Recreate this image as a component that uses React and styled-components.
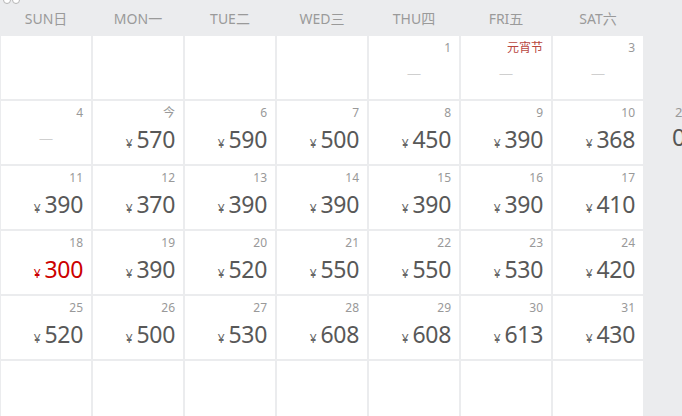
import React from 'react';
import styled, { createGlobalStyle } from 'styled-components';

const Global = createGlobalStyle`
  html, body {
    margin: 0;
    padding: 0;
    background: #ebecee;
    overflow: hidden;
  }
  body {
    font-family: "Noto Sans", "Noto Sans CJK SC", sans-serif;
  }
`;

const Page = styled.div`
  position: relative;
  display: flex;
  align-items: flex-start;
  width: 682px;
  height: 416px;
  overflow: hidden;
  background: #ebecee;
`;

const Calendar = styled.div`
  flex: none;
  display: flex;
  flex-direction: column;
  padding-left: 1px;
`;

const Header = styled.div`
  flex: none;
  display: grid;
  grid-template-columns: repeat(7, 90px);
  column-gap: 2px;
  height: 36px;
  align-items: center;
`;

const DayName = styled.div`
  text-align: center;
  font-size: 14px;
  color: #9a9a9a;
  padding-bottom: 1px;
`;

const Grid = styled.div`
  flex: none;
  display: grid;
  grid-template-columns: repeat(7, 90px);
  grid-auto-rows: 63px;
  gap: 2px;
`;

const Cell = styled.div`
  background: #fff;
  display: flex;
  flex-direction: column;
  padding: 4px 8px 0 8px;
`;

const DateLabel = styled.div`
  text-align: right;
  font-size: 12px;
  line-height: 15px;
  height: 15px;
  color: ${(p) => (p.$holiday ? '#b8473f' : '#999')};
`;

const Price = styled.div`
  margin-top: 6px;
  text-align: right;
  font-size: 23px;
  line-height: 26px;
  letter-spacing: -0.3px;
  color: ${(p) => (p.$low ? '#c00' : '#585858')};
`;

const Yen = styled.span`
  font-size: 12px;
  margin-right: 4px;
  color: ${(p) => (p.$low ? '#c00' : '#666')};
`;

const Dash = styled.div`
  margin-top: 9px;
  text-align: center;
  font-family: "Liberation Sans", sans-serif;
  font-size: 13px;
  line-height: 20px;
  color: #cfcfcf;
`;

const Side = styled.div`
  flex: none;
  display: flex;
  flex-direction: column;
  gap: 4px;
  padding: 104px 0 0 29px;
  white-space: nowrap;
`;

const SideSmall = styled.div`
  font-size: 13px;
  line-height: 16px;
  color: #999;
  padding-left: 3px;
`;

const SideBig = styled.div`
  font-size: 24px;
  line-height: 26px;
  color: #555;
`;

const Dots = styled.svg`
  position: absolute;
  left: 2px;
  top: -4px;
`;

const days = ['SUN日', 'MON一', 'TUE二', 'WED三', 'THU四', 'FRI五', 'SAT六'];

const cells = [
  null, null, null, null,
  { d: '1' }, { d: '元宵节', holiday: true }, { d: '3' },
  { d: '4' }, { d: '今', p: 570 }, { d: '6', p: 590 }, { d: '7', p: 500 },
  { d: '8', p: 450 }, { d: '9', p: 390 }, { d: '10', p: 368 },
  { d: '11', p: 390 }, { d: '12', p: 370 }, { d: '13', p: 390 }, { d: '14', p: 390 },
  { d: '15', p: 390 }, { d: '16', p: 390 }, { d: '17', p: 410 },
  { d: '18', p: 300, low: true }, { d: '19', p: 390 }, { d: '20', p: 520 }, { d: '21', p: 550 },
  { d: '22', p: 550 }, { d: '23', p: 530 }, { d: '24', p: 420 },
  { d: '25', p: 520 }, { d: '26', p: 500 }, { d: '27', p: 530 }, { d: '28', p: 608 },
  { d: '29', p: 608 }, { d: '30', p: 613 }, { d: '31', p: 430 },
  null, null, null, null, null, null, null,
];

const App = () => {
  return (
    <>
      <Global />
      <Page>
        <Dots width="24" height="10" viewBox="0 0 24 10">
          <circle cx="5" cy="4" r="3.5" fill="#fff" stroke="#b5b5b5" strokeWidth="1" />
          <circle cx="14" cy="4" r="3.5" fill="#fff" stroke="#b5b5b5" strokeWidth="1" />
        </Dots>
        <Calendar>
          <Header>
            {days.map((d) => (
              <DayName key={d}>{d}</DayName>
            ))}
          </Header>
          <Grid>
            {cells.map((c, i) => (
              <Cell key={i}>
                {c && (
                  <>
                    <DateLabel $holiday={c.holiday}>{c.d}</DateLabel>
                    {c.p ? (
                      <Price $low={c.low}>
                        <Yen $low={c.low}>¥</Yen>
                        {c.p}
                      </Price>
                    ) : (
                      <Dash>—</Dash>
                    )}
                  </>
                )}
              </Cell>
            ))}
          </Grid>
        </Calendar>
        <Side>
          <SideSmall>2月</SideSmall>
          <SideBig>0</SideBig>
        </Side>
      </Page>
    </>
  );
};

export default App;
